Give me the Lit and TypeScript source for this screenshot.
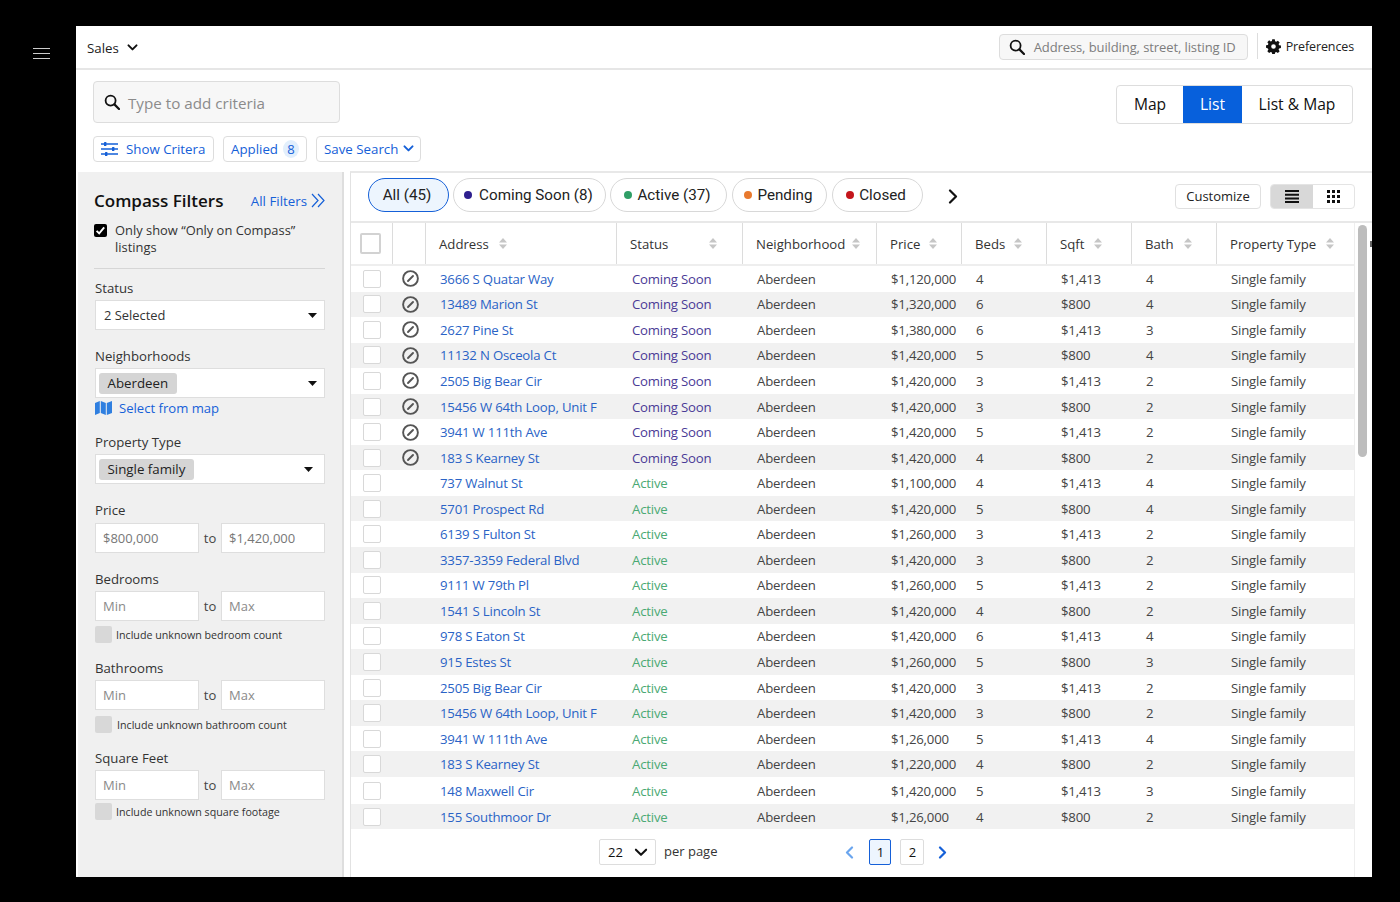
import { LitElement, html, css, svg } from "lit";
import { customElement } from "lit/decorators.js";

const L = (a: string, p: string, b: string, s: string, t: string, st = "Active") => ({ a, p, b, s, t, st });
const rows = [
  L("3666 S Quatar Way", "$1,120,000", "4", "$1,413", "4", "Coming Soon"),
  L("13489 Marion St", "$1,320,000", "6", "$800", "4", "Coming Soon"),
  L("2627 Pine St", "$1,380,000", "6", "$1,413", "3", "Coming Soon"),
  L("11132 N Osceola Ct", "$1,420,000", "5", "$800", "4", "Coming Soon"),
  L("2505 Big Bear Cir", "$1,420,000", "3", "$1,413", "2", "Coming Soon"),
  L("15456 W 64th Loop, Unit F", "$1,420,000", "3", "$800", "2", "Coming Soon"),
  L("3941 W 111th Ave", "$1,420,000", "5", "$1,413", "2", "Coming Soon"),
  L("183 S Kearney St", "$1,420,000", "4", "$800", "2", "Coming Soon"),
  L("737 Walnut St", "$1,100,000", "4", "$1,413", "4"),
  L("5701 Prospect Rd", "$1,420,000", "5", "$800", "4"),
  L("6139 S Fulton St", "$1,260,000", "3", "$1,413", "2"),
  L("3357-3359 Federal Blvd", "$1,420,000", "3", "$800", "2"),
  L("9111 W 79th Pl", "$1,260,000", "5", "$1,413", "2"),
  L("1541 S Lincoln St", "$1,420,000", "4", "$800", "2"),
  L("978 S Eaton St", "$1,420,000", "6", "$1,413", "4"),
  L("915 Estes St", "$1,260,000", "5", "$800", "3"),
  L("2505 Big Bear Cir", "$1,420,000", "3", "$1,413", "2"),
  L("15456 W 64th Loop, Unit F", "$1,420,000", "3", "$800", "2"),
  L("3941 W 111th Ave", "$1,26,000", "5", "$1,413", "4"),
  L("183 S Kearney St", "$1,220,000", "4", "$800", "2"),
  L("148 Maxwell Cir", "$1,420,000", "5", "$1,413", "3"),
  L("155 Southmoor Dr", "$1,26,000", "4", "$800", "2"),
];
const cols: [string, number][] = [
  ["Address", 10], ["Status", 41], ["Neighborhood", 7], ["Price", 9], ["Beds", 9],
  ["Sqft", 10], ["Bath", 10], ["Property Type", 10],
];

const search = (s: number) => html`<svg class="ic" width=${s} height=${s} viewBox="0 0 16 16" fill="none" stroke="#111" stroke-width="1.8" stroke-linecap="round"><circle cx="6.6" cy="6.6" r="5"/><path d="M10.4 10.4 15 15" stroke-width="2.2"/></svg>`;
const chevron = (w: number, color = "#111", sw = 2) => html`<svg class="ic" width=${w} height=${w * 0.65} viewBox="0 0 12 8" fill="none" stroke=${color} stroke-width=${sw} stroke-linecap="round" stroke-linejoin="round"><path d="M1.5 1.5 6 6l4.5-4.5"/></svg>`;
const caret = html`<svg class="ic" width="9" height="5" viewBox="0 0 9 5"><path d="M0 0h9L4.5 5z" fill="#111"/></svg>`;
const sort = html`<svg class="ic" width="8" height="11" viewBox="0 0 8 11"><path d="M4 0l4 4.4H0zM4 11 0 6.6h8z" fill="#c6c6c6"/></svg>`;
const noEntry = html`<svg class="ic" width="17" height="17" viewBox="0 0 17 17" fill="none" stroke="#555"><circle cx="8.5" cy="8.5" r="7.4" stroke-width="1.9"/><path d="M6 11l5-5" stroke-width="1.9" stroke-linecap="round"/></svg>`;
const gear = svg`<path fill="#111" fill-rule="evenodd" d="M6.6 0h2.8l.4 2.1 1.3.55 1.8-1.2 2 2-1.2 1.8.55 1.3 2.1.4v2.8l-2.1.4-.55 1.3 1.2 1.8-2 2-1.8-1.2-1.3.55-.4 2.1H6.6l-.4-2.1-1.3-.55-1.8 1.2-2-2 1.2-1.8-.55-1.3L-.35 9.4V6.6l2.1-.4.55-1.3-1.2-1.8 2-2 1.8 1.2 1.3-.55zM8 5.4a2.6 2.6 0 1 0 0 5.2 2.6 2.6 0 0 0 0-5.2z"/>`;

@customElement("app-root")
export class AppRoot extends LitElement {
  static styles = css`
    :host { display: block; width: 1400px; height: 902px; background: #000; font-family: "Open Sans", "Liberation Sans", sans-serif; color: #333; overflow: hidden; }
    * { box-sizing: border-box; }
    .ic { display: block; flex: none; }
    .page { display: flex; height: 902px; }
    .rail { width: 76px; padding: 48px 0 0 33px; flex: none; }
    .burger { width: 17px; height: 11px; border-top: 1px solid #ccc; border-bottom: 1px solid #ccc; position: relative; }
    .burger::after { content: ""; position: absolute; left: 0; right: 0; top: 4px; height: 1px; background: #ccc; }
    .frame { width: 1296px; height: 851px; margin-top: 26px; background: #fff; display: flex; flex-direction: column; }
    .top { height: 44px; flex: none; border-bottom: 2px solid #e6e6e6; display: flex; align-items: center; padding: 0 18px 0 11px; }
    .sales { font-size: 13.3px; color: #222; display: flex; align-items: center; gap: 8px; margin-top: 1px; }
    .sp { flex: 1; }
    .gsearch { width: 249px; height: 26px; border: 1px solid #ddd; border-radius: 4px; background: #f7f7f7; display: flex; align-items: center; gap: 9px; padding: 0 9px; font-size: 13px; letter-spacing: -0.1px; color: #7d7d7d; white-space: nowrap; margin-top: -1px; }
    .vsep { width: 1px; height: 26px; background: #ddd; margin: -2px 8px 0 9px; }
    .pref { display: flex; align-items: center; gap: 5px; font-size: 12.5px; letter-spacing: -0.12px; color: #222; margin-top: -2px; }
    .crit { height: 101px; flex: none; display: flex; justify-content: space-between; padding: 11px 19px 0 17px; }
    .critl { display: flex; flex-direction: column; gap: 13px; }
    .cinput { width: 247px; height: 42px; border: 1px solid #ddd; border-radius: 4px; background: #f7f7f7; display: flex; align-items: center; gap: 8px; padding: 0 10px; font-size: 15.2px; color: #8b8b8b; }
    .cinput span { margin-top: 1px; }
    .cbtns { display: flex; gap: 9px; }
    .cbtn { height: 26px; border: 1px solid #ddd; border-radius: 4px; background: #fff; color: #1560d8; font-size: 13.3px; font-weight: 500; display: flex; align-items: center; font-family: inherit; padding: 0 7px; white-space: nowrap; }
    .w1 { width: 121px; gap: 8px; }
    .w2 { width: 84px; gap: 5px; }
    .w3 { width: 105px; gap: 5px; }
    .badge { width: 18px; height: 18px; border-radius: 50%; background: #e2effc; display: flex; align-items: center; justify-content: center; font-size: 13px; }
    .seg { display: flex; height: 39px; margin-top: 4px; border: 1px solid #ddd; border-radius: 4px; overflow: hidden; font-size: 15.6px; font-weight: 500; color: #111; }
    .seg span { display: flex; align-items: center; justify-content: center; padding-bottom: 1px; }
    .seg .on { background: #0760dc; color: #fff; }
    .body { flex: 1; display: flex; min-height: 0; border-top: 1px solid transparent; }
    .side { width: 266px; margin-left: 2px; background: #f0f0f0; border-right: 2px solid #dedede; padding: 17px 17px 0 16px; flex: none; }
    .shead { display: flex; align-items: center; justify-content: space-between; height: 22px; }
    .stitle { font-size: 17px; font-weight: 600; color: #111; white-space: nowrap; }
    .allf { display: flex; align-items: center; gap: 4px; color: #1560d8; font-size: 13.3px; font-weight: 500; margin-top: 1px; }
    .only { display: flex; gap: 8px; font-size: 12.9px; line-height: 17px; color: #333; margin-top: 11px; height: 36px; }
    .cbk { width: 13px; height: 13px; background: #000; border-radius: 2px; flex: none; margin-top: 2px; }
    hr { border: 0; border-top: 1px solid #d6d6d6; margin: 10px 0 0; }
    .lab { font-size: 13.2px; font-weight: 500; color: #333; line-height: 18px; margin-left: 1px; }
    .fld { margin: 3px 0 0 1px; background: #fff; border: 1px solid #dedede; display: flex; align-items: center; justify-content: space-between; font-size: 12.9px; color: #333; height: 30px; padding: 0 7px 0 8px; }
    .chip { background: #d5d5d5; border-radius: 3px; height: 21px; padding: 0 8.5px; display: flex; align-items: center; margin-left: -5px; font-size: 13.3px; color: #222; }
    .selmap { display: flex; align-items: center; gap: 7px; font-size: 13.1px; font-weight: 500; color: #1560d8; margin: 0 0 0 1px; height: 20px; }
    .range { display: flex; align-items: center; margin: 3px 0 0 1px; font-size: 13px; color: #444; }
    .range.p { margin-top: 4px; }
    .inp { width: 104px; height: 30px; background: #fff; border: 1px solid #dedede; padding: 0 0 0 7px; font: 13px "Open Sans", sans-serif; color: #777; outline: 0; }
    .inp::placeholder { color: #8a8a8a; opacity: 1; }
    .to { width: 22px; text-align: center; }
    .unk { display: flex; align-items: center; gap: 4px; font-size: 10.7px; color: #333; margin: 5px 0 0 1px; height: 17px; white-space: nowrap; }
    .unk i { width: 17px; height: 17px; background: #d8d8d8; border-radius: 2px; flex: none; }
    .unk.b { margin-top: 6px; gap: 5px; }
    .unk.c { margin-top: 3px; }
    .l-status { margin-top: 10px; }
    .l-neigh { margin-top: 17px; }
    .l-prop { margin-top: 15px; }
    .l-price { margin-top: 17px; }
    .l-bed { margin-top: 17px; }
    .l-next { margin-top: 16px; }
    .main { flex: 1; min-width: 0; margin-left: 6px; border-left: 1px solid #e2e2e2; border-top: 2px solid #e8e8e8; margin-top: -1px; display: flex; flex-direction: column; }
    .tabs { height: 48px; flex: none; display: flex; align-items: flex-start; padding: 5px 17px 0 17px; }
    .tab { height: 34px; border: 1px solid #d8d8d8; border-radius: 17px; display: flex; align-items: center; justify-content: center; gap: 7px; font-family: Roboto, "Open Sans", sans-serif; font-size: 15.2px; color: #222; white-space: nowrap; margin-right: 4px; }
    .tab.on { background: #edf5fe; border: 1.5px solid #1560d8; padding-right: 3px; }
    .tab i { width: 8px; height: 8px; border-radius: 50%; }
    .t2 { width: 153px; padding-right: 2px; }
    .t3 { width: 117px; gap: 5px; padding-right: 2px; }
    .t4 { width: 95px; margin-left: 1px; gap: 5px; padding-right: 2px; }
    .t5 { width: 91px; margin-left: 1px; gap: 5px; padding-right: 3px; }
    .more { margin: 11px 0 0 21px; }
    .cust { height: 25px; width: 86px; margin: 6px 9px 0 0; border: 1px solid #e0e0e0; border-radius: 4px; font-size: 13px; color: #222; display: flex; align-items: center; justify-content: center; padding-bottom: 1px; }
    .view { height: 25px; width: 85px; margin-top: 6px; border: 1px solid #e4e4e4; border-radius: 4px; display: flex; overflow: hidden; }
    .view span { flex: 1; display: flex; align-items: center; justify-content: center; }
    .view .on { background: #d8d8d8; }
    .tw { flex: 1; min-height: 0; display: flex; border-top: 2px solid #e8e8e8; }
    .table { width: 1004px; flex: none; border-right: 1px solid #eee; display: flex; flex-direction: column; }
    .tr, .th { display: grid; grid-template-columns: 42px 33px 191px 126px 134px 85px 85px 85px 85px 137px; }
    .th { height: 43px; border-bottom: 2px solid #eee; flex: none; }
    .th > div { border-right: 1px solid #dcdcdc; display: flex; align-items: center; padding-left: 13px; font-size: 13.2px; font-weight: 500; color: #333; white-space: nowrap; }
    .th > div:last-child { border-right: 0; }
    .th .c0 { padding-left: 9px; }
    .cb0 { width: 21px; height: 21px; border: 2px solid #d2d2d2; border-radius: 2px; }
    .tr { height: 25.55px; font-size: 13.2px; letter-spacing: -0.2px; color: #444; }
    .tr.even { background: #f1f1f1; }
    .tr.tall { height: 27px; padding-top: 2px; }
    .tr > div { display: flex; align-items: center; padding-left: 14px; white-space: nowrap; }
    .tr .c0 { padding-left: 12px; }
    .tr .c1 { padding-left: 9px; }
    .cb { width: 18px; height: 18px; border: 1px solid #d8d8d8; background: #fff; border-radius: 2px; }
    .addr { color: #2a63c6; }
    .tr .cs { color: #4a3a96; padding-left: 15px; }
    .tr .ac { color: #4aa973; padding-left: 15px; }
    .pager { flex: 1; display: flex; align-items: flex-start; padding: 10px 0 0 248px; font-size: 13px; color: #333; }
    .pp { width: 57px; height: 26px; border: 1px solid #ddd; border-radius: 2px; display: flex; align-items: center; justify-content: space-between; padding: 0 7px 0 8px; color: #111; }
    .ppl { margin: 3px 0 0 8px; }
    .pgb { height: 26px; border: 1px solid #ddd; border-radius: 2px; display: flex; align-items: center; justify-content: center; color: #111; font-size: 13px; }
    .pgb.on { background: #edf5fe; border: 1.5px solid #1560d8; width: 22px; margin-left: 15px; }
    .pgb.n2 { width: 24px; margin-left: 9px; }
    .pv { margin: 7px 0 0 128px; }
    .nx { margin: 7px 0 0 14px; }
    .track { flex: 1; position: relative; }
    .thumb { position: absolute; left: 3px; top: 2px; width: 9px; height: 232px; border-radius: 5px; background: #bdbdbd; }
    .tick { position: absolute; right: 0; top: 18px; width: 2px; height: 6px; background: #666; }
  `;

  render() {
    return html`<div class="page">
      <div class="rail"><div class="burger"></div></div>
      <div class="frame">
        <div class="top">
          <div class="sales">Sales ${chevron(11, "#111", 2.2)}</div>
          <div class="sp"></div>
          <div class="gsearch">${search(16)}<span>Address, building, street, listing ID</span></div>
          <div class="vsep"></div>
          <div class="pref"><svg class="ic" width="15" height="15" viewBox="-.4 -.4 16.8 16.8">${gear}</svg>Preferences</div>
        </div>
        <div class="crit">
          <div class="critl">
            <div class="cinput">${search(16)}<span>Type to add criteria</span></div>
            <div class="cbtns">
              <div class="cbtn w1"><svg class="ic" width="17" height="14" viewBox="0 0 17 14" fill="#1560d8"><path d="M0 1.2h17v1.6H0zM0 6.2h17v1.6H0zM0 11.2h17v1.6H0z"/><rect x="3" y="0" width="2.4" height="4" rx=".6"/><rect x="11" y="5" width="2.4" height="4" rx=".6"/><rect x="4" y="10" width="2.4" height="4" rx=".6"/></svg>Show Critera</div>
              <div class="cbtn w2">Applied <span class="badge">8</span></div>
              <div class="cbtn w3">Save Search ${chevron(11, "#1560d8", 2.2)}</div>
            </div>
          </div>
          <div class="seg"><span style="width:66px">Map</span><span class="on" style="width:59px">List</span><span style="width:110px">List &amp; Map</span></div>
        </div>
        <div class="body">
          <aside class="side">
            <div class="shead"><span class="stitle">Compass Filters</span>
              <span class="allf">All Filters <svg class="ic" width="14" height="15" viewBox="0 0 14 15" fill="none" stroke="#1560d8" stroke-width="1.2"><path d="M1 1l6 6.5L1 14M7 1l6 6.5L7 14"/></svg></span></div>
            <div class="only"><span class="cbk"><svg class="ic" width="13" height="13" viewBox="0 0 13 13" fill="none" stroke="#fff" stroke-width="1.9"><path d="M2.6 6.8l2.6 2.6 5-6"/></svg></span><span>Only show “Only on Compass” listings</span></div>
            <hr />
            <div class="lab l-status">Status</div>
            <div class="fld">2 Selected ${caret}</div>
            <div class="lab l-neigh">Neighborhoods</div>
            <div class="fld"><span class="chip">Aberdeen</span>${caret}</div>
            <div class="selmap"><svg class="ic" width="17" height="14" viewBox="0 0 17 14" fill="#2f7fe0"><path d="M0 2l4.8-2v12L0 14zM5.8 0l5 2v12l-5-2zM11.8 2L17 0v12l-5.2 2z"/></svg>Select from map</div>
            <div class="lab l-prop">Property Type</div>
            <div class="fld"><span class="chip">Single family</span><span style="margin-right:4px">${caret}</span></div>
            <div class="lab l-price">Price</div>
            <div class="range p"><input class="inp" value="$800,000" /><span class="to">to</span><input class="inp" value="$1,420,000" /></div>
            <div class="lab l-bed">Bedrooms</div>
            <div class="range"><input class="inp" placeholder="Min" /><span class="to">to</span><input class="inp" placeholder="Max" /></div>
            <div class="unk"><i></i>Include unknown bedroom count</div>
            <div class="lab l-next">Bathrooms</div>
            <div class="range"><input class="inp" placeholder="Min" /><span class="to">to</span><input class="inp" placeholder="Max" /></div>
            <div class="unk b"><i></i>Include unknown bathroom count</div>
            <div class="lab l-next">Square Feet</div>
            <div class="range"><input class="inp" placeholder="Min" /><span class="to">to</span><input class="inp" placeholder="Max" /></div>
            <div class="unk c"><i></i>Include unknown square footage</div>
          </aside>
          <section class="main">
            <div class="tabs">
              <div class="tab on" style="width:81px">All (45)</div>
              <div class="tab t2"><i style="background:#2e1f8e"></i>Coming Soon (8)</div>
              <div class="tab t3"><i style="background:#2f9e66"></i>Active (37)</div>
              <div class="tab t4"><i style="background:#e8792e"></i>Pending</div>
              <div class="tab t5"><i style="background:#c4161c"></i>Closed</div>
              <svg class="ic more" width="10" height="15" viewBox="0 0 10 15" fill="none" stroke="#111" stroke-width="2.2" stroke-linecap="round" stroke-linejoin="round"><path d="M2 1.5 8 7.5l-6 6"/></svg>
              <div class="sp"></div>
              <div class="cust">Customize</div>
              <div class="view">
                <span class="on"><svg class="ic" width="14" height="13" viewBox="0 0 14 13" fill="#111"><path d="M0 0h14v2H0zM0 3.7h14v2H0zM0 7.4h14v2H0zM0 11h14v2H0z"/></svg></span>
                <span><svg class="ic" width="13" height="13" viewBox="0 0 13 13" fill="#111"><path d="M0 0h3v3H0zM5 0h3v3H5zM10 0h3v3h-3zM0 5h3v3H0zM5 5h3v3H5zM10 5h3v3h-3zM0 10h3v3H0zM5 10h3v3H5zM10 10h3v3h-3z"/></svg></span>
              </div>
            </div>
            <div class="tw">
              <div class="table">
                <div class="th">
                  <div class="c0"><span class="cb0"></span></div><div></div>
                  ${cols.map(([n, g]) => html`<div>${n}<span style="margin-left:${g}px">${sort}</span></div>`)}
                </div>
                ${rows.map((r, i) => html`<div class="tr ${i % 2 ? "even" : ""} ${i === 20 ? "tall" : ""}">
                  <div class="c0"><span class="cb"></span></div>
                  <div class="c1">${r.st === "Coming Soon" ? noEntry : ""}</div>
                  <div class="addr">${r.a}</div>
                  <div class=${r.st === "Coming Soon" ? "cs" : "ac"}>${r.st}</div>
                  <div>Aberdeen</div><div>${r.p}</div><div>${r.b}</div><div>${r.s}</div><div>${r.t}</div><div>Single family</div>
                </div>`)}
                <div class="pager">
                  <div class="pp">22 ${chevron(14, "#111", 1.8)}</div>
                  <span class="ppl">per page</span>
                  <svg class="ic pv" width="9" height="13" viewBox="0 0 9 13" fill="none" stroke="#6aa5ee" stroke-width="2.2" stroke-linecap="round" stroke-linejoin="round"><path d="M7 1.5 2 6.5l5 5"/></svg>
                  <div class="pgb on">1</div><div class="pgb n2">2</div>
                  <svg class="ic nx" width="9" height="13" viewBox="0 0 9 13" fill="none" stroke="#1560d8" stroke-width="2.2" stroke-linecap="round" stroke-linejoin="round"><path d="M2 1.5l5 5-5 5"/></svg>
                </div>
              </div>
              <div class="track"><div class="thumb"></div><div class="tick"></div></div>
            </div>
          </section>
        </div>
      </div>
    </div>`;
  }
}
